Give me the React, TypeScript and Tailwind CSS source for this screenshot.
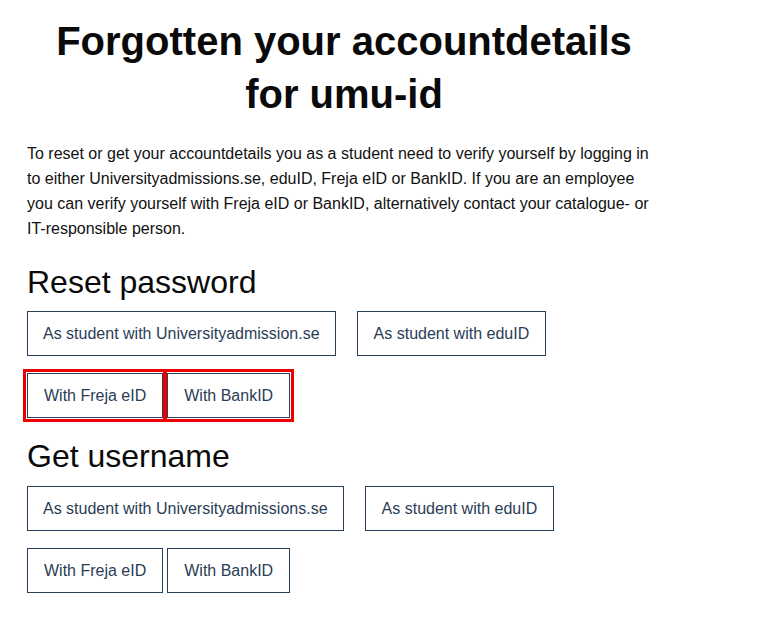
import React from "react";

const base =
  "h-[45px] flex items-center border border-[#28405c] text-[#2a3d55] text-[16px] bg-white whitespace-nowrap";
const btnLong = base + " px-[15px]";
const btn = base + " px-4";

export default function App() {
  return (
    <div className="min-h-[620px] w-[760px] bg-white" style={{ fontFamily: '"Liberation Sans", Arial, sans-serif' }}>
      <div className="ml-[27px] w-[634px] pt-[15px]">
        <h1 className="text-center text-[40px] font-bold leading-[53px] text-[#0a0a0a]">
          Forgotten your accountdetails
          <br />
          for umu-id
        </h1>
        <p className="mt-[20px] text-[16px] leading-[25px] text-[#111]">
          To reset or get your accountdetails you as a student need to verify yourself by logging in to either
          Universityadmissions.se, eduID, Freja eID or BankID. If you are an employee you can verify yourself with
          Freja eID or BankID, alternatively contact your catalogue- or IT-responsible person.
        </p>
        <h2 className="mt-[22px] text-[32px] leading-[38px] text-[#0a0a0a]">Reset password</h2>
        <div className="mt-[10px] flex">
          <div className={btnLong}>As student with Universityadmission.se</div>
          <div className={btn + " ml-[21px]"}>As student with eduID</div>
        </div>
        <div className="mt-[17px] flex">
          <div className={btn + " outline-[3px] outline-solid outline-[#ee0000] outline-offset-[1px]"}>With Freja eID</div>
          <div className={btn + " ml-[4px] outline-[3px] outline-solid outline-[#ee0000] outline-offset-[1px]"}>With BankID</div>
        </div>
        <h2 className="mt-[19px] text-[32px] leading-[38px] text-[#0a0a0a]">Get username</h2>
        <div className="mt-[11px] flex">
          <div className={btnLong}>As student with Universityadmissions.se</div>
          <div className={btn + " ml-[21px]"}>As student with eduID</div>
        </div>
        <div className="mt-[17px] flex">
          <div className={btn}>With Freja eID</div>
          <div className={btn + " ml-[4px]"}>With BankID</div>
        </div>
      </div>
    </div>
  );
}
